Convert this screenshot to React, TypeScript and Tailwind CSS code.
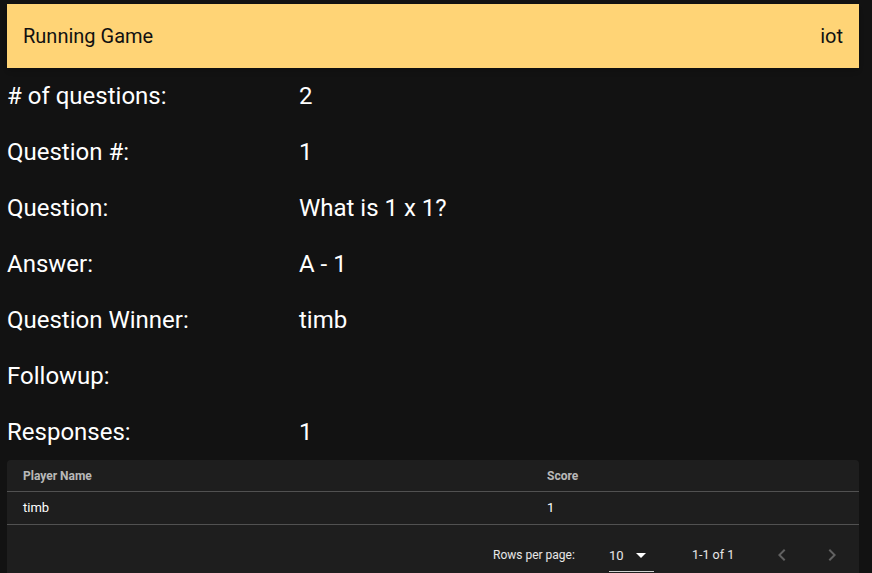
import React from "react";

const rows: [string, string][] = [
  ["# of questions:", "2"],
  ["Question #:", "1"],
  ["Question:", "What is 1 x 1?"],
  ["Answer:", "A - 1"],
  ["Question Winner:", "timb"],
  ["Followup:", ""],
  ["Responses:", "1"],
];

export default function App() {
  return (
    <div
      className="w-[872px] h-[573px] overflow-hidden bg-[#121212] text-white"
      style={{ fontFamily: "Roboto, 'Liberation Sans', sans-serif" }}
    >
      <div className="pl-[7px] pt-[4px] w-[859px]">
        <div className="h-[64px] bg-[#ffd476] text-[#111] flex items-center justify-between px-4 text-[20px] shadow-md">
          <span>Running Game</span>
          <span>iot</span>
        </div>
        {rows.map(([l, v]) => (
          <div key={l} className="h-[56px] flex items-center text-[24px]">
            <div className="w-[292px]">{l}</div>
            <div>{v}</div>
          </div>
        ))}
        <div className="bg-[#1e1e1e] rounded-[4px] text-[13px]">
          <div className="h-[32px] flex items-center border-b border-[#515151] px-4 text-[12px] font-bold text-white/70 pt-[1px]">
            <div className="w-[524px]">Player Name</div>
            <div>Score</div>
          </div>
          <div className="h-[33px] flex items-center border-b border-[#515151] px-4 text-white">
            <div className="w-[524px]">timb</div>
            <div>1</div>
          </div>
          <div className="h-[60px] flex items-center text-[12px] text-white/90">
            <div className="ml-[486px] w-[116px]">Rows per page:</div>
            <div className="w-[45px] h-[30px] flex items-center justify-between border-b border-white/80 mt-[4px] pb-[2px]">
              <span className="text-[13px]">10</span>
              <svg width="10" height="5" viewBox="0 0 10 5" className="mr-[8px]">
                <path d="M0 0 L10 0 L5 5 Z" fill="white" />
              </svg>
            </div>
            <div className="ml-[38px] w-[80px] text-[12.5px]">1-1 of 1</div>
            <svg width="24" height="24" viewBox="0 0 24 24" className="ml-[-2px]">
              <path d="M15.41 7.41 14 6l-6 6 6 6 1.41-1.41L10.83 12z" fill="rgba(255,255,255,0.3)" />
            </svg>
            <svg width="24" height="24" viewBox="0 0 24 24" className="ml-[26px]">
              <path d="M10 6 8.59 7.41 13.17 12l-4.58 4.59L10 18l6-6z" fill="rgba(255,255,255,0.3)" />
            </svg>
          </div>
        </div>
      </div>
    </div>
  );
}
